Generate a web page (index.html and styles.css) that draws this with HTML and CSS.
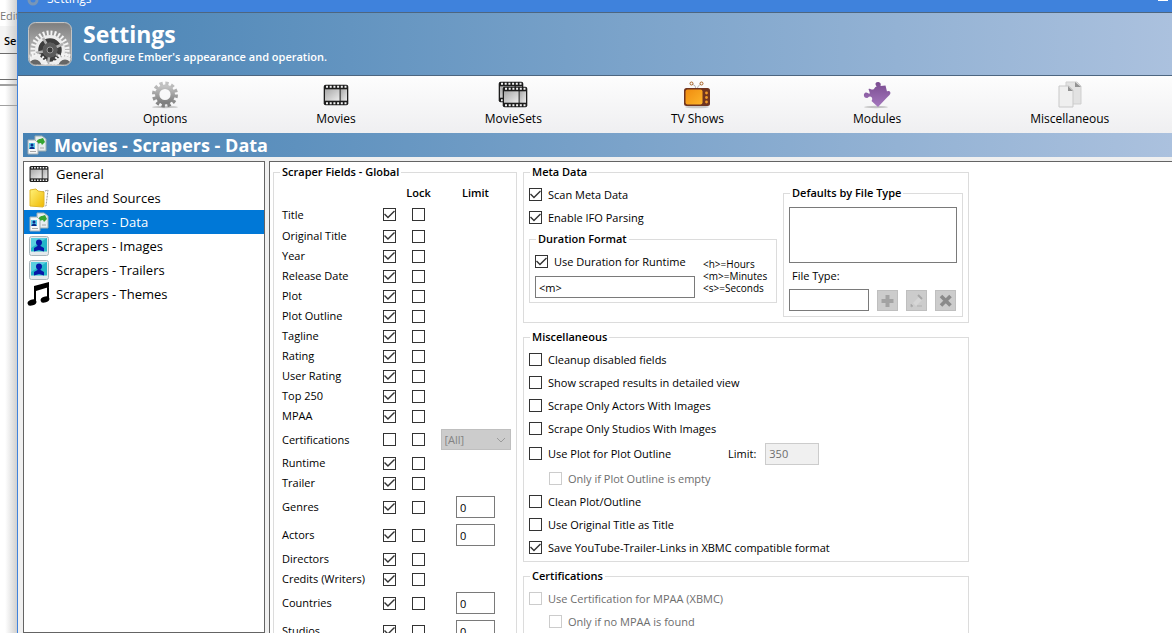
FILE: index.html
```html
<!DOCTYPE html>
<html lang="en">
<head>
<meta charset="utf-8">
<title>Settings</title>
<link rel="stylesheet" href="styles.css">
</head>
<body>
<svg class="defs" width="0" height="0" aria-hidden="true">
  <defs>
    <linearGradient id="silver" x1="0" y1="0" x2="0" y2="1"><stop offset="0" stop-color="#7c7c7c"/><stop offset="0.5" stop-color="#a9a9a9"/><stop offset="1" stop-color="#dadada"/></linearGradient>
    <linearGradient id="gear" x1="0" y1="0" x2="0" y2="1"><stop offset="0" stop-color="#c2c2c2"/><stop offset="1" stop-color="#7f7f7f"/></linearGradient>
    <linearGradient id="frame" x1="0" y1="0" x2="1" y2="1"><stop offset="0" stop-color="#a8a8a8"/><stop offset="1" stop-color="#ececec"/></linearGradient>
    <linearGradient id="orange" x1="0" y1="0" x2="1" y2="1"><stop offset="0" stop-color="#f08c10"/><stop offset="1" stop-color="#fdb52a"/></linearGradient>
    <linearGradient id="purple" x1="0" y1="0" x2="0" y2="1"><stop offset="0" stop-color="#7a4c90"/><stop offset="1" stop-color="#a477bd"/></linearGradient>
    <linearGradient id="yellow" x1="0" y1="0" x2="1" y2="1"><stop offset="0" stop-color="#fff27a"/><stop offset="1" stop-color="#efb800"/></linearGradient>
    <symbol id="film" viewBox="0 0 26 22">
      <rect x="0.7" y="0.7" width="24.6" height="20.6" rx="2" fill="#1d1d1d"/>
      <path d="M3 2.8H24M3 19.2H24" stroke="#f4f4f4" stroke-width="2" stroke-dasharray="2 1.7"/>
      <rect x="2" y="5.3" width="14.6" height="11.4" fill="url(#frame)"/><rect x="17.6" y="5.3" width="6.4" height="11.4" fill="url(#frame)"/>
    </symbol>
    <symbol id="data" viewBox="0 0 20 20">
      <path d="M8 1h7l4 3v12H8z" fill="#e9eef0" stroke="#9fb0b0"/><path d="M9 10c0-4 2-6 4-6l3-1 2 4-3 3-1-2c-2 0-3 1-5 2z" fill="#35a532"/>
      <path d="M1 5h7l3 3v11H1z" fill="#f5f7f8" stroke="#a5b0b5"/><rect x="2" y="8" width="6" height="6" fill="#59c7e8"/><circle cx="5" cy="10" r="1.500" fill="#0a2c8c"/><path d="M2.500 14c0-3 5-3 5 0z" fill="#0a2c8c"/><path d="M3 16.500h6M13 13h4" stroke="#a8a8a8"/>
    </symbol>
    <symbol id="picture" viewBox="0 0 20 20">
      <rect x="0.5" y="0.5" width="19" height="19" rx="2" fill="#e3e9ec" stroke="#a9b5ba"/><rect x="2" y="2" width="16" height="13.500" fill="#22b5c8"/><path d="M2 2h16L2 12z" fill="#58cfe0"/>
      <circle cx="10" cy="6.500" r="3" fill="#0717a8"/><path d="M8.500 8h3l0 2 3.500 2v3.500l-5-1.500-5 1.500V12l3.500-2z" fill="#0717a8"/>
    </symbol>
  </defs>
</svg>
<div class="desktop">
  <aside class="behind">
    <div class="behind-menu">Edit</div>
    <div class="behind-tab">Se</div>
    <div class="behind-box"></div>
    <div class="behind-rule"></div>
    <div class="behind-body"></div>
  </aside>
  <main class="dialog">
    <div class="titlebar"><svg width="14" height="14" viewBox="0 0 14 14"><circle cx="7" cy="7" r="4" fill="none" stroke="#7796b8" stroke-width="3"/></svg><span>Settings</span><i class="titlebar-box"></i></div>
    <header class="banner">
      <svg class="banner-icon" width="44" height="44" viewBox="0 0 44 44">
        <defs><clipPath id="tile"><rect x="1.500" y="1.500" width="41" height="41" rx="6"/></clipPath></defs>
        <rect x="0.5" y="0.5" width="43" height="43" rx="7" fill="#8c8c8c" stroke="#c5c5c5"/>
        <g clip-path="url(#tile)">
          <rect width="44" height="44" fill="url(#silver)"/>
          <circle cx="22" cy="28" r="17" fill="none" stroke="#f4f4f4" stroke-width="5" stroke-dasharray="1.900 1.914"/>
          <circle cx="22" cy="28" r="13" fill="#8e8e8e" stroke="#ededed" stroke-width="4"/>
          <circle cx="22" cy="28" r="9.500" fill="none" stroke="#3d3d3d" stroke-width="4.500"/>
          <path d="M22 28L15 16M22 28L35 22M22 28L8 31M22 28L34 36M22 28L20 42" stroke="#b0b0b0" stroke-width="2.500"/>
          <circle cx="22" cy="28" r="7.500" fill="#5b5b5b"/><circle cx="22" cy="28" r="3" fill="#3a3a3a" stroke="#9b9b9b"/>
          <circle cx="7" cy="44" r="11" fill="none" stroke="#f4f4f4" stroke-width="4" stroke-dasharray="1.700 1.756"/><circle cx="7" cy="44" r="8" fill="#666" stroke="#eee" stroke-width="3"/>
          <circle cx="37" cy="44" r="11" fill="none" stroke="#f4f4f4" stroke-width="4" stroke-dasharray="1.700 1.756"/><circle cx="37" cy="44" r="8" fill="#666" stroke="#eee" stroke-width="3"/>
        </g>
      </svg>
      <div><h1>Settings</h1><p>Configure Ember's appearance and operation.</p></div>
    </header>
    <nav class="tools">
      <button type="button"><svg width="28" height="28" viewBox="0 0 28 28"><ellipse cx="14" cy="26" rx="13" ry="1.200" fill="#c4c4c4"/><circle cx="14" cy="13.500" r="11" fill="none" stroke="url(#gear)" stroke-width="4" stroke-dasharray="3.200 2.560"/><circle cx="14" cy="13.500" r="7.800" fill="none" stroke="url(#gear)" stroke-width="4.400"/></svg>Options</button>
      <button type="button"><svg width="28" height="28" viewBox="0 0 28 28"><use href="#film" x="1" y="3" width="26" height="22"/></svg>Movies</button>
      <button type="button"><svg width="30" height="28" viewBox="0 0 30 28"><use href="#film" x="0" y="0" width="26" height="22"/><use href="#film" x="4" y="5" width="26" height="22"/></svg>MovieSets</button>
      <button type="button"><svg width="28" height="28" viewBox="0 0 28 28"><ellipse cx="14" cy="26" rx="12" ry="1.300" fill="#c9c9c9"/><path d="M9 3q4 1 4 5M18 3q-3 1-4 5" fill="none" stroke="#b8b8b8"/><circle cx="8.500" cy="2.500" r="1.500" fill="none" stroke="#a86020"/><circle cx="18.500" cy="2.500" r="1.500" fill="none" stroke="#a86020"/><rect x="1" y="7" width="26" height="18" rx="2.500" fill="#6f3420"/><rect x="2.500" y="8.500" width="17" height="15" rx="2" fill="url(#orange)"/><circle cx="23.500" cy="12" r="1.400" fill="#f09a28"/><circle cx="23.500" cy="16.500" r="1.400" fill="#f09a28"/><circle cx="23.500" cy="21" r="1.400" fill="#f09a28"/></svg>TV Shows</button>
      <button type="button"><svg width="28" height="28" viewBox="0 0 28 28"><ellipse cx="13" cy="26" rx="12" ry="1.200" fill="#c4c4c4"/><path d="M14 5.500C11 3 13 .500 15.500 1s2.500 2.500 2 4l5-.500 1.500 6c3-1.500 4.500 1.500 2.500 3.500l-3 3-8.500 9-6.500-6c1.500-2 .500-4.500-1.500-4.500s-1.500 1.500-3 1.500C0 17 0 12 3 11.500c2 0 2 1.500 4 1L5.500 8c2-1 2.500 1 4.500.500S11.500 5.500 14 5.500z" fill="url(#purple)"/></svg>Modules</button>
      <button type="button"><svg width="28" height="28" viewBox="0 0 28 28"><path d="M10 1h11l4 4v18H10z" fill="#e2e2e2" stroke="#cfcfcf"/><path d="M19 1v5h6z" fill="#929292"/><path d="M3 5h10l4 4v17H3z" fill="#efefef" stroke="#c9c9c9"/><path d="M12 5v5h5z" fill="#929292"/></svg>Miscellaneous</button>
    </nav>
    <section class="work">
      <h2 class="heading"><svg width="20" height="20"><use href="#data"/></svg>Movies - Scrapers - Data</h2>
      <div class="panes">
        <ul class="tree">
          <li><svg width="20" height="20" viewBox="0 0 20 20"><use href="#film" y="1" width="20" height="18"/></svg>General</li>
          <li><svg width="20" height="20" viewBox="0 0 20 20"><path d="M13 4l6-2-2 16h-4z" fill="#fff" stroke="#999" stroke-dasharray="2 1"/><path d="M1 2l6-1 2 2 6 1v13l-1 2-13-1z" fill="url(#yellow)" stroke="#e0b528"/></svg>Files and Sources</li>
          <li class="selected"><svg width="20" height="20"><use href="#data"/></svg>Scrapers - Data</li>
          <li><svg width="20" height="20"><use href="#picture"/></svg>Scrapers - Images</li>
          <li><svg width="20" height="20"><use href="#picture"/></svg>Scrapers - Trailers</li>
          <li><svg width="24" height="24" viewBox="0 0 24 24"><path d="M7 4L22 0v5L9 9v10H7zM20 3h2v14h-2z"/><ellipse cx="5" cy="20.500" rx="4.500" ry="3" transform="rotate(-18 5 20.500)"/><ellipse cx="18" cy="17.500" rx="4.500" ry="3" transform="rotate(-18 18 17.500)"/></svg>Scrapers - Themes</li>
        </ul>
        <form class="panel">
          <fieldset class="fields">
            <legend>Scraper Fields - Global</legend>
            <table>
              <thead><tr><th></th><th></th><th>Lock</th><th>Limit</th></tr></thead>
              <tbody>
                <tr class="first"><td><label for="f1">Title</label></td><td><input type="checkbox" id="f1" checked></td><td><input type="checkbox" aria-label="Lock Title"></td><td></td></tr>
                <tr><td><label for="f2">Original Title</label></td><td><input type="checkbox" id="f2" checked></td><td><input type="checkbox" aria-label="Lock Original Title"></td><td></td></tr>
                <tr><td><label for="f3">Year</label></td><td><input type="checkbox" id="f3" checked></td><td><input type="checkbox" aria-label="Lock Year"></td><td></td></tr>
                <tr><td><label for="f4">Release Date</label></td><td><input type="checkbox" id="f4" checked></td><td><input type="checkbox" aria-label="Lock Release Date"></td><td></td></tr>
                <tr><td><label for="f5">Plot</label></td><td><input type="checkbox" id="f5" checked></td><td><input type="checkbox" aria-label="Lock Plot"></td><td></td></tr>
                <tr><td><label for="f6">Plot Outline</label></td><td><input type="checkbox" id="f6" checked></td><td><input type="checkbox" aria-label="Lock Plot Outline"></td><td></td></tr>
                <tr><td><label for="f7">Tagline</label></td><td><input type="checkbox" id="f7" checked></td><td><input type="checkbox" aria-label="Lock Tagline"></td><td></td></tr>
                <tr><td><label for="f8">Rating</label></td><td><input type="checkbox" id="f8" checked></td><td><input type="checkbox" aria-label="Lock Rating"></td><td></td></tr>
                <tr><td><label for="f9">User Rating</label></td><td><input type="checkbox" id="f9" checked></td><td><input type="checkbox" aria-label="Lock User Rating"></td><td></td></tr>
                <tr><td><label for="f10">Top 250</label></td><td><input type="checkbox" id="f10" checked></td><td><input type="checkbox" aria-label="Lock Top 250"></td><td></td></tr>
                <tr><td><label for="f11">MPAA</label></td><td><input type="checkbox" id="f11" checked></td><td><input type="checkbox" aria-label="Lock MPAA"></td><td></td></tr>
                <tr class="combo-row"><td><label for="f12">Certifications</label></td><td><input type="checkbox" id="f12"></td><td><input type="checkbox" aria-label="Lock Certifications"></td><td><div class="combo"><select disabled aria-label="Certification country"><option>[All]</option></select><svg width="10" height="6" viewBox="0 0 10 6"><path d="M1 1l4 4 4-4" fill="none" stroke="#9b9b9b"/></svg></div></td></tr>
                <tr><td><label for="f13">Runtime</label></td><td><input type="checkbox" id="f13" checked></td><td><input type="checkbox" aria-label="Lock Runtime"></td><td></td></tr>
                <tr><td><label for="f14">Trailer</label></td><td><input type="checkbox" id="f14" checked></td><td><input type="checkbox" aria-label="Lock Trailer"></td><td></td></tr>
                <tr class="tall"><td><label for="f15">Genres</label></td><td><input type="checkbox" id="f15" checked></td><td><input type="checkbox" aria-label="Lock Genres"></td><td><input type="text" class="limit" value="0" aria-label="Genres limit"></td></tr>
                <tr class="tall"><td><label for="f16">Actors</label></td><td><input type="checkbox" id="f16" checked></td><td><input type="checkbox" aria-label="Lock Actors"></td><td><input type="text" class="limit" value="0" aria-label="Actors limit"></td></tr>
                <tr><td><label for="f17">Directors</label></td><td><input type="checkbox" id="f17" checked></td><td><input type="checkbox" aria-label="Lock Directors"></td><td></td></tr>
                <tr><td><label for="f18">Credits (Writers)</label></td><td><input type="checkbox" id="f18" checked></td><td><input type="checkbox" aria-label="Lock Credits"></td><td></td></tr>
                <tr class="tall"><td><label for="f19">Countries</label></td><td><input type="checkbox" id="f19" checked></td><td><input type="checkbox" aria-label="Lock Countries"></td><td><input type="text" class="limit" value="0" aria-label="Countries limit"></td></tr>
                <tr class="tall"><td><label for="f20">Studios</label></td><td><input type="checkbox" id="f20" checked></td><td><input type="checkbox" aria-label="Lock Studios"></td><td><input type="text" class="limit" value="0" aria-label="Studios limit"></td></tr>
              </tbody>
            </table>
          </fieldset>
          <div class="groups">
            <fieldset>
              <legend>Meta Data</legend>
              <div class="meta">
                <div class="meta-left">
                  <label class="check"><input type="checkbox" checked>Scan Meta Data</label>
                  <label class="check"><input type="checkbox" checked>Enable IFO Parsing</label>
                  <fieldset class="duration">
                    <legend>Duration Format</legend>
                    <div class="duration-row">
                      <div>
                        <label class="check"><input type="checkbox" checked>Use Duration for Runtime</label>
                        <input type="text" class="format" value="&lt;m&gt;" aria-label="Duration format">
                      </div>
                      <p class="hint">&lt;h&gt;=Hours<br>&lt;m&gt;=Minutes<br>&lt;s&gt;=Seconds</p>
                    </div>
                  </fieldset>
                </div>
                <fieldset class="defaults">
                  <legend>Defaults by File Type</legend>
                  <select class="listbox" size="4" aria-label="File type defaults"></select>
                  <label class="file-label" for="filetype">File Type:</label>
                  <div class="file-row">
                    <input type="text" id="filetype">
                    <button type="button" disabled aria-label="Add"><svg width="21" height="21" viewBox="0 0 21 21"><path d="M8.500 5h4v4h4v4h-4v4h-4v-4h-4V9h4z" fill="#a3a3a3"/></svg></button>
                    <button type="button" disabled aria-label="Edit"><svg width="21" height="21" viewBox="0 0 21 21"><path d="M7 13l6-6 3 3-6 6z" fill="#d6d6d6"/><path d="M12 5l4 4" stroke="#a6a6a6" stroke-width="2"/><path d="M5 14l2 2-2 1zM11 16h5" stroke="#b0b0b0" fill="#9b9b9b"/></svg></button>
                    <button type="button" disabled aria-label="Remove"><svg width="21" height="21" viewBox="0 0 21 21"><path d="M6 6l9.500 9.500M15.500 6L6 15.500" stroke="#8a8a8a" stroke-width="3.600"/></svg></button>
                  </div>
                </fieldset>
              </div>
            </fieldset>
            <fieldset>
              <legend>Miscellaneous</legend>
              <label class="check"><input type="checkbox">Cleanup disabled fields</label>
              <label class="check"><input type="checkbox">Show scraped results in detailed view</label>
              <label class="check"><input type="checkbox">Scrape Only Actors With Images</label>
              <label class="check"><input type="checkbox">Scrape Only Studios With Images</label>
              <div class="outline-row">
                <label class="check"><input type="checkbox">Use Plot for Plot Outline</label>
                <label for="outline">Limit:</label>
                <input type="text" id="outline" value="350" disabled>
              </div>
              <label class="check sub off"><input type="checkbox" disabled>Only if Plot Outline is empty</label>
              <label class="check"><input type="checkbox">Clean Plot/Outline</label>
              <label class="check"><input type="checkbox">Use Original Title as Title</label>
              <label class="check"><input type="checkbox" checked>Save YouTube-Trailer-Links in XBMC compatible format</label>
            </fieldset>
            <fieldset class="certs">
              <legend>Certifications</legend>
              <label class="check off"><input type="checkbox" disabled>Use Certification for MPAA (XBMC)</label>
              <label class="check sub off"><input type="checkbox" disabled>Only if no MPAA is found</label>
            </fieldset>
          </div>
        </form>
      </div>
    </section>
  </main>
</div>
</body>
</html>
```
FILE: styles.css
```css
* { box-sizing: border-box; }
body {
  margin: 0;
  height: 100vh;
  overflow: hidden;
  font: 11px/16px "Open Sans", "Noto Sans", sans-serif;
  color: #000;
}
h1, h2, p, ul { margin: 0; padding: 0; }
svg { display: block; flex: none; }
input, select, button { font: inherit; margin: 0; color: inherit; }
.defs { position: absolute; }
.desktop { display: flex; height: 100%; }

/* Window underneath the dialog */
.behind {
  flex: none;
  width: 17px;
  overflow: hidden;
  display: flex;
  flex-direction: column;
  background: linear-gradient(to right, #fff 30%, #d0d0d0);
}
.behind-menu { height: 26px; padding-top: 8px; color: #777; font-size: 11px; }
.behind-tab { height: 27px; padding: 7px 0 0 4px; font-weight: 600; background: linear-gradient(to right, #f4f4f4 30%, #cfcfcf); }
.behind-box { height: 27px; border: solid #6c6c6c; border-width: 1px 0; }
.behind-rule { height: 22px; margin-top: 4px; border: solid #a0a0a0; border-width: 2px 0 1px; }
.behind-body { flex: 1; }

.dialog {
  flex: 1;
  min-width: 0;
  display: flex;
  flex-direction: column;
  border-left: 1px solid #3f82dc;
  background: #f0f0f0;
}
.titlebar {
  flex: none;
  height: 12px;
  padding: 0 4px 5px 8px;
  overflow: hidden;
  display: flex;
  align-items: flex-end;
  gap: 7px;
  background: #3f82dc;
  color: #fff;
  font-size: 12px;
}
.titlebar-box { width: 10px; height: 1px; margin-left: auto; background: #fff; align-self: flex-start; }
.banner {
  flex: none;
  height: 64px;
  padding: 0 10px;
  display: flex;
  align-items: center;
  gap: 11px;
  border: solid #4d6680;
  border-width: 1px 0;
  background: linear-gradient(to right, #4682b4, #abc1de);
  color: #fff;
}
.banner h1 { font-size: 23px; line-height: 26px; }
.banner p { font-weight: 600; line-height: 20px; }
.tools {
  flex: none;
  height: 57px;
  padding: 5px 0 0 125px;
  display: flex;
  align-items: flex-start;
  gap: 129px;
  background: linear-gradient(#fdfdfd, #efeff1);
}
.tools button {
  display: flex;
  flex-direction: column;
  align-items: center;
  gap: 2px;
  padding: 0;
  border: 0;
  background: none;
  font-size: 12px;
  white-space: nowrap;
}
.work { flex: 1; min-height: 0; display: flex; flex-direction: column; gap: 4px; padding-left: 5px; }
.heading {
  flex: none;
  height: 24px;
  padding-left: 4px;
  display: flex;
  align-items: center;
  gap: 7px;
  background: linear-gradient(to right, #4682b4, #abc1de);
  color: #fff;
  font-size: 18px;
}
.panes { flex: 1; min-height: 0; display: flex; gap: 4px; }
.tree {
  flex: none;
  width: 242px;
  list-style: none;
  border: 1px solid #646464;
  background: #fff;
  font-size: 13px;
}
.tree li { height: 24px; padding-left: 5px; display: flex; align-items: center; gap: 7px; }
.tree li:last-child { padding-left: 3px; gap: 5px; }
.tree .selected { background: #0078d7; color: #fff; }
.panel {
  flex: 1;
  min-width: 0;
  overflow: hidden;
  display: flex;
  align-items: flex-start;
  gap: 6px;
  padding: 2px 0 0 3px;
  border: solid #646464;
  border-width: 1px 0 0 1px;
  background: #fff;
}

fieldset { min-width: 0; margin: 0; padding: 3px 5px 2px; border: 1px solid #dcdcdc; }
legend { height: 16px; margin-left: 1px; padding: 0 2px; font-weight: 600; }
.groups { flex: none; width: 446px; display: flex; flex-direction: column; gap: 6px; }
.certs { padding-bottom: 40px; }

input[type="checkbox"] {
  appearance: none;
  flex: none;
  display: block;
  width: 13px;
  height: 13px;
  border: 1px solid #333;
  background: #fff;
}
input[type="checkbox"]:checked::before {
  content: "";
  display: block;
  height: 11px;
  background: #333;
  clip-path: polygon(0 50%, 9% 41%, 36% 68%, 91% 13%, 100% 22%, 36% 86%);
}
input[type="checkbox"]:disabled { border-color: #ccc; }
input[type="text"] { height: 22px; padding: 0 3px; border: 1px solid #7a7a7a; background: #fff; }
.check { display: flex; align-items: center; gap: 6px; height: 23px; white-space: nowrap; }
.sub { padding-left: 20px; }
.off { color: #6d6d6d; }

.fields { flex: none; width: 244px; padding: 3px 0 2px 8px; }
.fields legend { margin-left: -2px; }
table { width: 100%; table-layout: fixed; border-collapse: collapse; }
th, td { height: 20px; padding: 0; text-align: left; white-space: nowrap; }
th { font-weight: 600; }
th:nth-child(1) { width: 93px; }
th:nth-child(2), th:nth-child(3) { width: 29px; }
th:nth-child(n+3) { text-align: center; }
th:nth-child(4), td:nth-child(4) { padding-left: 2px; }
.first td { height: 23px; }
.combo-row td { height: 27px; }
.tall td { height: 28px; }
td input { margin: 0 auto; }
td .limit { display: block; width: 39px; }
.combo {
  width: 70px;
  height: 21px;
  margin: 0 auto;
  display: flex;
  align-items: center;
  padding-right: 4px;
  border: 1px solid #bfbfbf;
  background: #ccc;
}
.combo select { appearance: none; flex: 1; min-width: 0; padding: 0 3px; border: 0; background: none; color: #838383; opacity: 1; }

.meta { display: flex; align-items: flex-start; gap: 6px; padding-bottom: 3px; }
.meta-left { flex: 1; min-width: 0; }
.duration { margin-top: 2px; padding-bottom: 4px; }
.duration-row { display: flex; gap: 8px; }
.format { display: block; width: 160px; margin-top: 3px; }
.hint { padding-top: 8px; font-size: 10px; line-height: 12px; white-space: nowrap; }
.defaults { flex: none; width: 180px; margin-top: 2px; padding-bottom: 5px; }
.listbox { display: block; width: 168px; height: 56px; margin-top: 3px; border: 1px solid #7a7a7a; border-radius: 0; background: #fff; }
.file-label { display: block; padding: 5px 3px; }
.file-row { display: flex; align-items: center; gap: 8px; }
.file-row input { width: 80px; }
.file-row button { width: 21px; height: 21px; padding: 0; border: 1px solid #bfbfbf; background: #ccc; }
.file-row button svg { margin: -1px; }
.outline-row { display: flex; align-items: center; height: 27px; }
.outline-row .check { width: 199px; }
.outline-row input[type="text"] { width: 54px; margin-left: 9px; border-color: #ccc; background: #f0f0f0; color: #6d6d6d; }
```
